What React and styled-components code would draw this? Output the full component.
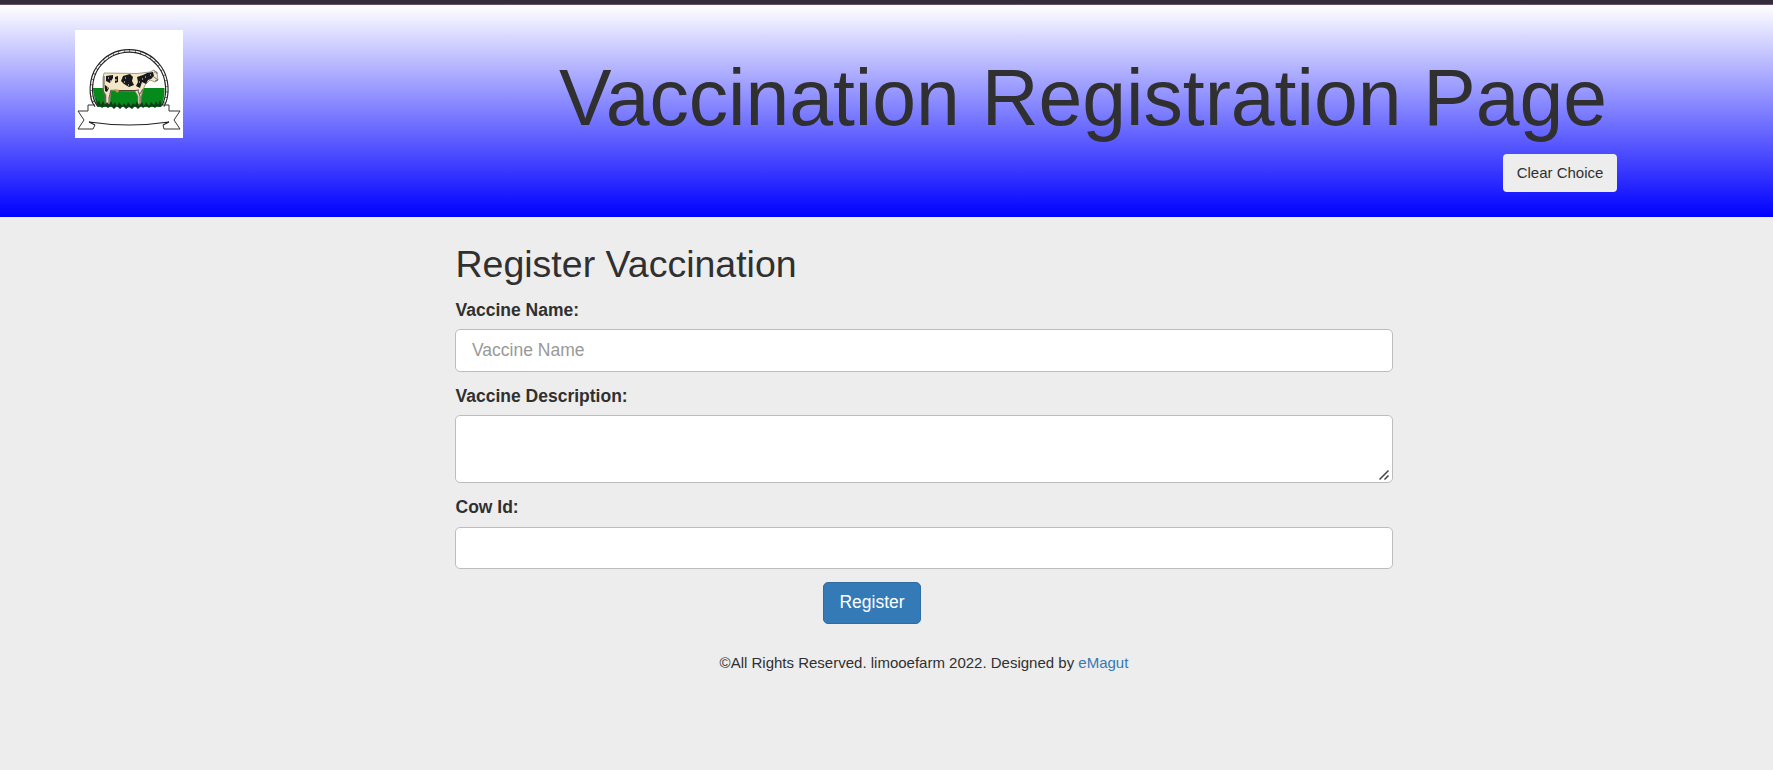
import React from 'react';
import styled, { createGlobalStyle } from 'styled-components';

const GlobalStyle = createGlobalStyle`
  *, *::before, *::after { box-sizing: border-box; }
  html { background: #ededed; }
  body {
    margin: 0;
    min-height: 770px;
    overflow: hidden;
    background: #ededed;
    color: #303030;
    font: 17.5px/25px Arial, "Liberation Sans", sans-serif;
  }
`;

const TopBar = styled.div`
  height: 5px;
  background: #332d3b;
  border-bottom: 1px solid #66516f;
`;

const Header = styled.header`
  display: flex;
  justify-content: space-between;
  align-items: flex-start;
  height: 212px;
  padding: 25px 156px 0 75px;
  background: linear-gradient(#fff, #00f);
`;

const Logo = styled.svg`
  display: block;
  width: 108px;
  height: 108px;
  background: #fff;
`;

const Heading = styled.div`
  display: flex;
  flex-direction: column;
  align-items: flex-end;
`;

const Title = styled.h1`
  margin: 24px 10px 0 0;
  font-size: 78.75px;
  font-weight: 400;
  line-height: 88px;
  letter-spacing: -0.04px;
  white-space: nowrap;
`;

const ClearButton = styled.button`
  width: 114px;
  height: 38px;
  margin-top: 12px;
  padding: 0;
  border: 0;
  border-radius: 4px;
  background: #ededed;
  color: #303030;
  font: 15px/38px Arial, "Liberation Sans", sans-serif;
`;

const Main = styled.main`
  width: 938px;
  margin-left: 455px;
  padding-top: 27px;
`;

const FormTitle = styled.h2`
  margin: 0 0 13px 0.5px;
  font-size: 37.5px;
  font-weight: 400;
  line-height: 41px;
`;

const Label = styled.label`
  display: block;
  height: 25px;
  margin: 0 0 ${(p) => p.$gap}px 0.5px;
  font-weight: 700;
`;

const Group = styled.div`
  margin-bottom: ${(p) => p.$gap}px;
`;

const Input = styled.input`
  display: block;
  width: 100%;
  height: ${(p) => p.$height}px;
  padding: 0 16px;
  border: 1px solid #bdbdbd;
  border-radius: 5px;
  outline: 0;
  background: #fff;
  font: inherit;
  &::placeholder { color: #999; opacity: 1; }
`;

const TextAreaWrap = styled.div`
  position: relative;
`;

const TextArea = styled.textarea`
  display: block;
  width: 100%;
  height: 68px;
  padding: 8px 16px;
  border: 1px solid #bdbdbd;
  border-radius: 5px;
  outline: 0;
  background: #fff;
  font: inherit;
  resize: none;
`;

const Grip = styled.svg`
  position: absolute;
  right: 3px;
  bottom: 3px;
  width: 11px;
  height: 10px;
  pointer-events: none;
`;

const RegisterButton = styled.button`
  display: block;
  width: 98px;
  height: 42px;
  margin-left: 368px;
  padding: 0 0 1px;
  border: 1px solid #2e6da4;
  border-radius: 5px;
  background: #337ab7;
  color: #fff;
  font: inherit;
`;

const Footer = styled.footer`
  margin-top: 27px;
  text-align: center;
  font-size: 15px;
  line-height: 24px;
`;

const Credit = styled.a`
  color: #337ab7;
  text-decoration: none;
`;

const RING = 'M21 76C14 67 15 48 23 37C39 15.5 69 15.5 85 37C93 48 94 65 88 76';

function FarmLogo() {
  return (
    <Logo viewBox="0 0 108 108" role="img" aria-label="Farm">
      <path d="M18 58H89.5Q90 68 86 77H23Q18.4 68 18 58Z" fill="#078a1c" />
      <path d={RING} fill="none" stroke="#222" strokeWidth="3.6" />
      <path d={RING} fill="none" stroke="#fff" strokeWidth="1.3" strokeDasharray="5 .6" />
      <path d="M29 43L62 43.5L75 42L79 40L82 43L83 50L80 52L75 50L70 55L68 60L66 67L66 74L63 74L63 66L60 61L50 61L36 60L35 68L35 74L31 74L31 65L28 60L28 48Z" fill="#f2e8c5" stroke="#8d8779" strokeWidth=".8" />
      <path d="M29 46V57L28 63L30 67L30 74M36 60L34 68V75M63 61L65 66V75M68 59L65 64" fill="none" stroke="#6a5d52" strokeWidth="1.1" />
      <path d="M39 59L42 63L45 60Z" fill="#c59157" />
      <path d="M31 46L38 45L38 48L35 53L31 51ZM40 47L43 46L43 52L40 53ZM48 46L55 44L58 47L57 51L59 55L54 57L49 54L46 51ZM62 47L68 45L72 43L78 42L79 46L76 49L73 50L71 54L67 52L65 58L61 56L63 52ZM30 55L34 58L32 62L30 61Z" fill="#19191b" />
      <path d="M44 60.5H60L64 60" stroke="#4a4038" fill="none" />
      <path d="M33 48h1M35 51h1M41 49v2M50 48h1M49 52h1M53 55h1M67 49h1M75 45h1M64 52h1M70 47h1M32 58h1" stroke="#fff" strokeWidth="1" />
      <path d="M79 42L82 42L82 44M79 47L83 50L80 51" fill="none" stroke="#555" strokeWidth=".8" />
      <path d="M21 68L23 73L24 70L26 75L28 71L30 75L32 72L34 75L36 71L38 75L40 72L42 76L44 72L47 76L49 73L51 76L53 72L56 76L58 73L60 75L62 71L64 76L67 72L69 76L71 72L74 76L76 72L79 75L81 71L83 75L85 70L87 76L85 77L82 76L80 78L77 76L74 78L71 76L68 78L66 76L63 79L60 76L57 79L54 77L51 79L48 76L45 79L42 76L39 79L36 76L33 78L30 76L27 78L25 76L22 77Z" fill="#123b1b" />
      <path d="M20 75H13V81H3L9 90L3 99H18L20 95M88 75H94V81H105L99 90L105 99H89L88 95" fill="none" stroke="#333" strokeWidth="1" />
      <path d="M20 95L14 92Q54 98 94 92L88 95" fill="none" stroke="#222" strokeWidth="1.1" />
    </Logo>
  );
}

export default function App() {
  return (
    <>
      <GlobalStyle />
      <TopBar />
      <Header>
        <FarmLogo />
        <Heading>
          <Title>Vaccination Registration Page</Title>
          <ClearButton type="button">Clear Choice</ClearButton>
        </Heading>
      </Header>
      <Main>
        <FormTitle>Register Vaccination</FormTitle>
        <Group $gap={12}>
          <Label htmlFor="name" $gap={6}>Vaccine Name:</Label>
          <Input id="name" $height={43} placeholder="Vaccine Name" />
        </Group>
        <Group $gap={12}>
          <Label htmlFor="description" $gap={6}>Vaccine Description:</Label>
          <TextAreaWrap>
            <TextArea id="description" />
            <Grip viewBox="0 0 11 10" aria-hidden="true">
              <path d="M.5 9.5L9.5 .5M5.5 9.5L9.5 5.5" stroke="#444" strokeWidth="1.5" />
            </Grip>
          </TextAreaWrap>
        </Group>
        <Group $gap={13}>
          <Label htmlFor="cow" $gap={7}>Cow Id:</Label>
          <Input id="cow" $height={42} />
        </Group>
        <RegisterButton type="button">Register</RegisterButton>
        <Footer>
          ©All Rights Reserved. limooefarm 2022. Designed by <Credit>eMagut</Credit>
        </Footer>
      </Main>
    </>
  );
}
